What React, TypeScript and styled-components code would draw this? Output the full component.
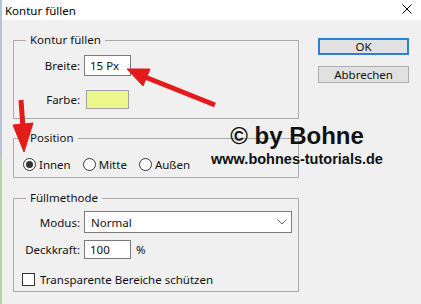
import styled, { createGlobalStyle } from "styled-components";

const GlobalStyle = createGlobalStyle`
  html, body {
    margin: 0;
    padding: 0;
  }
  body {
    background: #f0f0f0;
    font-family: "Noto Sans", "Liberation Sans", sans-serif;
    color: #000;
  }
`;

// --------------
// Window frame
// --------------
const Window = styled.div`
  position: relative;
  display: flex;
  width: 421px;
  height: 304px;
  overflow: hidden;
`;

const Edge = styled.div`
  width: 2px;
  flex-shrink: 0;
  background: linear-gradient(
    to bottom,
    #b9c3d6 0,
    #b9c3d6 158px,
    #b6d2ab 158px,
    #b6d2ab 100%
  );
`;

const Dialog = styled.div`
  flex: 1;
  display: flex;
  flex-direction: column;
  background: #f0f0f0;
`;

const TitleBar = styled.div`
  height: 20px;
  flex-shrink: 0;
  background: #fff;
  display: flex;
  align-items: center;
  justify-content: space-between;
  padding: 0 9px 0 3px;
  font-size: 11.5px;
`;

const CloseIcon = styled.svg`
  width: 10px;
  height: 10px;
  margin-top: -2px;
`;

const Body = styled.div`
  position: relative;
  flex: 1;
  display: flex;
  align-items: flex-start;
  padding: 12px 0 0 11px;
  font-size: 11.5px;
  color: #111;
`;

const Column = styled.div`
  width: 286px;
  display: flex;
  flex-direction: column;
`;

// --------------
// Group boxes
// --------------
const Group = styled.fieldset<{ $gap?: number; $bottom: number }>`
  margin: ${(p) => p.$gap ?? 0}px 0 0 0;
  padding: 0 0 ${(p) => p.$bottom}px 0;
  min-width: 0;
  border: 1px solid #acacac;
  display: flex;
  flex-direction: column;
`;

const Legend = styled.legend`
  margin-left: 12px;
  padding: 0 4px;
  line-height: 16px;
`;

const Row = styled.div<{ $top: number }>`
  display: flex;
  align-items: center;
  margin-top: ${(p) => p.$top}px;
`;

const Label = styled.span`
  width: 66px;
  text-align: right;
  margin-right: 4px;
  flex-shrink: 0;
`;

const Input = styled.div<{ $height: number }>`
  box-sizing: border-box;
  width: 47px;
  height: ${(p) => p.$height}px;
  background: #fff;
  border: 1px solid #7a7a7a;
  display: flex;
  align-items: center;
  padding-left: 5px;
`;

const Unit = styled.span`
  margin-left: 5px;
`;

const Swatch = styled.div`
  box-sizing: border-box;
  width: 43px;
  height: 19px;
  margin-left: 2px;
  background: #ecf88c;
  border: 1px solid #a0a0a0;
`;

const Select = styled.div`
  box-sizing: border-box;
  width: 208px;
  height: 22px;
  background: #fff;
  border: 1px solid #7a7a7a;
  display: flex;
  align-items: center;
  justify-content: space-between;
  padding: 0 4px 0 6px;
`;

const Chevron = styled.svg`
  width: 10px;
  height: 6px;
`;

const Options = styled.div`
  display: flex;
  align-items: center;
  gap: 12px;
  margin: 12px 0 0 9px;
  height: 13px;
`;

const Option = styled.label`
  display: flex;
  align-items: center;
  gap: 3px;
`;

const Radio = styled.span<{ $checked?: boolean }>`
  box-sizing: border-box;
  width: 13px;
  height: 13px;
  border-radius: 50%;
  border: 1px solid #333;
  background: #fff;
  display: flex;
  align-items: center;
  justify-content: center;
  &::after {
    content: "";
    width: 7px;
    height: 7px;
    border-radius: 50%;
    background: ${(p) => (p.$checked ? "#333" : "transparent")};
  }
`;

const CheckRow = styled.label`
  display: flex;
  align-items: center;
  gap: 5px;
  margin: 14px 0 0 8px;
  height: 13px;
`;

const Checkbox = styled.span`
  box-sizing: border-box;
  width: 13px;
  height: 13px;
  border: 1px solid #333;
  background: #fff;
`;

// --------------
// Buttons
// --------------
const ButtonColumn = styled.div`
  display: flex;
  flex-direction: column;
  gap: 11px;
  margin-left: 19px;
  padding-top: 6px;
`;

const Button = styled.div<{ $primary?: boolean }>`
  box-sizing: border-box;
  width: 91px;
  height: 17px;
  background: #e1e1e1;
  border: ${(p) => (p.$primary ? "2px solid #2f7fd0" : "1px solid #adadad")};
  display: flex;
  align-items: center;
  justify-content: center;
`;

// --------------
// Overlays
// --------------
const Watermark = styled.div`
  position: absolute;
  left: 195px;
  top: 104px;
  width: 200px;
  text-align: center;
  font-family: "Liberation Sans", Arial, sans-serif;
  font-weight: bold;
  color: #111;
`;

const Signature = styled.div`
  font-size: 24px;
  line-height: 24px;
`;

const Site = styled.div`
  font-size: 14.5px;
  line-height: 15px;
  margin-top: 4px;
`;

const Arrows = styled.svg`
  position: absolute;
  left: 0;
  top: 0;
  width: 421px;
  height: 304px;
  pointer-events: none;
`;

export default function App() {
  return (
    <>
      <GlobalStyle />
      <Window>
        <Edge />
        <Dialog>
          <TitleBar>
            <span>Kontur füllen</span>
            <CloseIcon viewBox="0 0 10 10">
              <path d="M0.5 0.5 L9.5 9.5 M9.5 0.5 L0.5 9.5" stroke="#000" strokeWidth="1" />
            </CloseIcon>
          </TitleBar>
          <Body>
            <Column>
              <Group $bottom={9}>
                <Legend>Kontur füllen</Legend>
                <Row $top={7}>
                  <Label>Breite:</Label>
                  <Input $height={21}>15 Px</Input>
                </Row>
                <Row $top={14}>
                  <Label>Farbe:</Label>
                  <Swatch />
                </Row>
              </Group>
              <Group $gap={11} $bottom={6}>
                <Legend>Position</Legend>
                <Options>
                  <Option>
                    <Radio $checked />
                    Innen
                  </Option>
                  <Option>
                    <Radio />
                    Mitte
                  </Option>
                  <Option>
                    <Radio />
                    Außen
                  </Option>
                </Options>
              </Group>
              <Group $gap={12} $bottom={5}>
                <Legend>Füllmethode</Legend>
                <Row $top={5}>
                  <Label>Modus:</Label>
                  <Select>
                    Normal
                    <Chevron viewBox="0 0 10 6">
                      <path d="M0.5 0.5 L5 5 L9.5 0.5" fill="none" stroke="#666" strokeWidth="1" />
                    </Chevron>
                  </Select>
                </Row>
                <Row $top={7}>
                  <Label>Deckkraft:</Label>
                  <Input $height={19}>100</Input>
                  <Unit>%</Unit>
                </Row>
                <CheckRow>
                  <Checkbox />
                  Transparente Bereiche schützen
                </CheckRow>
              </Group>
            </Column>
            <ButtonColumn>
              <Button $primary>OK</Button>
              <Button>Abbrechen</Button>
            </ButtonColumn>
            <Watermark>
              <Signature>© by Bohne</Signature>
              <Site>www.bohnes-tutorials.de</Site>
            </Watermark>
          </Body>
        </Dialog>
        <Arrows viewBox="0 0 421 304">
          <g fill="#e31b1b" stroke="#e31b1b">
            <line x1="215" y1="105" x2="145" y2="77" strokeWidth="5" />
            <polygon points="127,69 150,69 143,86" strokeWidth="1" />
            <line x1="21" y1="100" x2="23" y2="128" strokeWidth="5" />
            <polygon points="13,125 33,123 24,152" strokeWidth="1" />
          </g>
        </Arrows>
      </Window>
    </>
  );
}
